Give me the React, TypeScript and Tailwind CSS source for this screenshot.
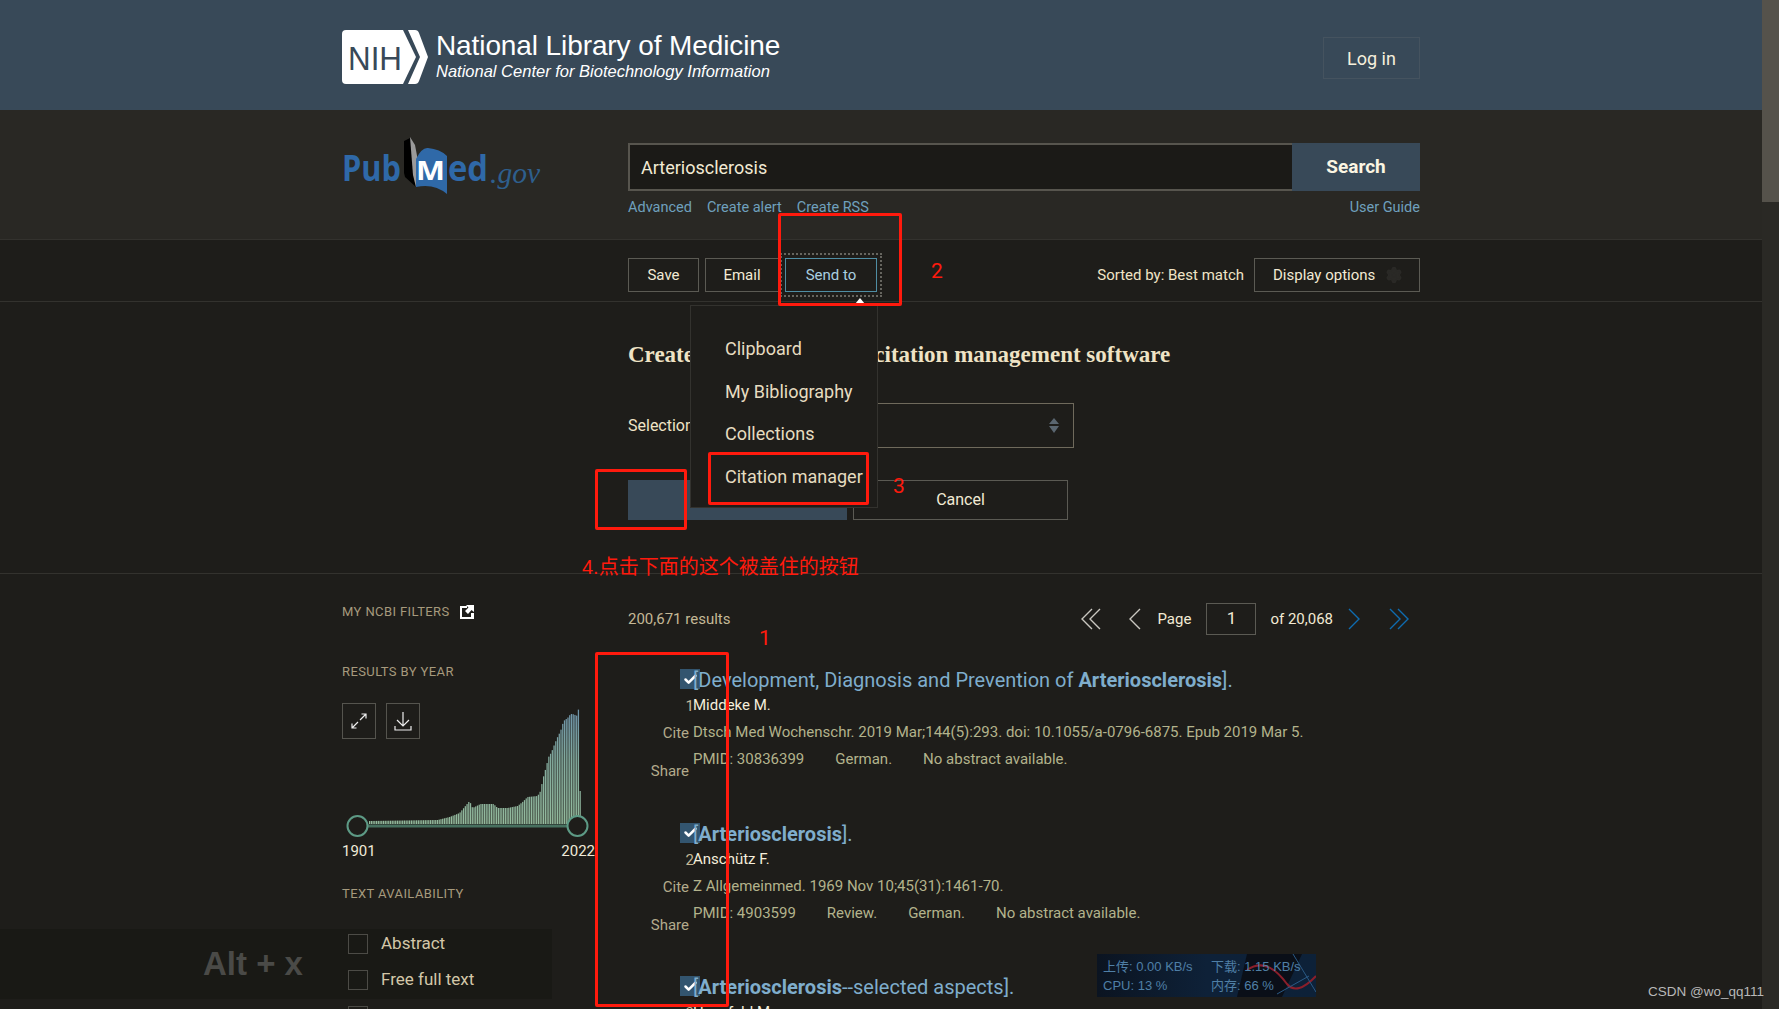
import React from 'react';
import { Check, Settings } from 'lucide-react';

const yearKeys: [number, number][] = [
  [0, 3], [68, 4], [80, 7], [90, 11], [100, 23], [103, 16], [111, 20], [124, 20], [128, 16], [138, 16],
  [148, 18], [153, 22], [158, 27], [168, 28], [171, 33], [173, 44], [176, 55], [179, 67], [182, 72],
  [185, 80], [188, 87], [191, 93], [194, 103], [198, 106], [201, 110], [203, 110], [208, 108], [209, 116], [211, 107],
];

function barHeight(x: number) {
  for (let i = 1; i < yearKeys.length; i++) {
    const [x0, h0] = yearKeys[i - 1];
    const [x1, h1] = yearKeys[i];
    if (x <= x1) return h0 + ((h1 - h0) * (x - x0)) / (x1 - x0);
  }
  return 33;
}

const bars = Array.from({ length: 122 }, (_, i) => {
  const x = i * 1.74;
  return { x: 27 + x, h: i === 121 ? 33 : barHeight(x) };
});

const results = [
  {
    n: 1,
    title: (
      <>
        [Development, Diagnosis and Prevention of <b className="font-bold">Arteriosclerosis</b>].
      </>
    ),
    author: 'Middeke M.',
    citation: 'Dtsch Med Wochenschr. 2019 Mar;144(5):293. doi: 10.1055/a-0796-6875. Epub 2019 Mar 5.',
    tags: ['PMID: 30836399', 'German.', 'No abstract available.'],
  },
  {
    n: 2,
    title: (
      <>
        [<b className="font-bold">Arteriosclerosis</b>].
      </>
    ),
    author: 'Anschütz F.',
    citation: 'Z Allgemeinmed. 1969 Nov 10;45(31):1461-70.',
    tags: ['PMID: 4903599', 'Review.', 'German.', 'No abstract available.'],
  },
  {
    n: 3,
    title: (
      <>
        [<b className="font-bold">Arteriosclerosis</b>--selected aspects].
      </>
    ),
    author: 'Hanefeld M.',
    citation: '',
    tags: [],
  },
];

function NihLogo() {
  return (
    <svg width="86" height="54" viewBox="0 0 86 54" className="shrink-0">
      <path d="M4 0H61L74 27L61 54H4Q0 54 0 50V4Q0 0 4 0Z" fill="#fff" />
      <path d="M66 0H73Q76 0 77 3L86 27L77 51Q76 54 73 54H66L78 27Z" fill="#fff" />
      <text x="6" y="40" fontFamily="'Liberation Sans', sans-serif" fontSize="34" fill="#384958" textLength="54" lengthAdjust="spacingAndGlyphs">
        NIH
      </text>
    </svg>
  );
}

function PubMedLogo() {
  return (
    <svg width="200" height="60" viewBox="0 0 200 60" className="shrink-0">
      <text x="0" y="44" fontFamily="'Open Sans', sans-serif" fontWeight="700" fontSize="36" fill="#2f69a8" textLength="59" lengthAdjust="spacingAndGlyphs">
        Pub
      </text>
      <path d="M62 36L62 4L68 1L71 10L72 42L74 50L63 40Z" fill="#000" />
      <path d="M68 0L73 8L76 24L74 50L71 38Z" fill="#9a9a9a" />
      <path d="M74 22Q80 10 86 11Q98 12 105 19L105 57Q92 46 74 50Z" fill="#2f69a8" />
      <text x="74" y="43" fontFamily="'Open Sans', sans-serif" fontWeight="700" fontSize="27" fill="#fff" textLength="29" lengthAdjust="spacingAndGlyphs">
        M
      </text>
      <text x="106" y="44" fontFamily="'Open Sans', sans-serif" fontWeight="700" fontSize="36" fill="#2f69a8" textLength="40" lengthAdjust="spacingAndGlyphs">
        ed
      </text>
      <text x="148" y="46" fontFamily="'Liberation Serif', serif" fontStyle="italic" fontSize="29" fill="#2e5f8d" textLength="50" lengthAdjust="spacingAndGlyphs">
        .gov
      </text>
    </svg>
  );
}

function Chevrons({ dir, double, color }: { dir: 'left' | 'right'; double?: boolean; color: string }) {
  const left = dir === 'left';
  return (
    <svg width={double ? 20 : 12} height="22" viewBox={double ? '0 0 20 22' : '0 0 12 22'} fill="none" stroke={color} strokeWidth="1.4">
      {left ? (
        <>
          <path d="M11 1L1 11L11 21" />
          {double && <path d="M19 1L9 11L19 21" />}
        </>
      ) : (
        <>
          <path d="M1 1L11 11L1 21" />
          {double && <path d="M9 1L19 11L9 21" />}
        </>
      )}
    </svg>
  );
}

function YearChart() {
  return (
    <svg width="248" height="140" viewBox="0 0 248 140" className="block">
      <defs>
        <linearGradient id="bar" gradientUnits="userSpaceOnUse" x1="0" y1="8" x2="0" y2="124">
          <stop offset="0" stopColor="#6d93ab" />
          <stop offset="0.45" stopColor="#83ab9e" />
          <stop offset="1" stopColor="#94bb9d" />
        </linearGradient>
      </defs>
      {bars.map((b) => (
        <rect key={b.x} x={b.x} y={124 - b.h} width="1.25" height={b.h} fill="url(#bar)" />
      ))}
      <rect x="25" y="124.5" width="200" height="3" fill="#47705f" />
      <circle cx="15.5" cy="126" r="10" fill="#1e1d1a" stroke="#5d9a85" strokeWidth="2" />
      <circle cx="235.5" cy="126" r="10" fill="#1e1d1a" stroke="#5d9a85" strokeWidth="2" />
    </svg>
  );
}

function SideTitle({ children, className }: { children: React.ReactNode; className?: string }) {
  return <div className={`h-5 text-[13px] leading-5 tracking-[0.4px] text-[#a69a7d] ${className ?? ''}`}>{children}</div>;
}

function FilterRow({ label }: { label: string }) {
  return (
    <div className="flex h-9 items-center">
      <span className="ml-[6px] h-5 w-5 shrink-0 border border-[#4c4b46]" />
      <span className="ml-[13px] text-[17px] text-[#d3c7a8]">{label}</span>
    </div>
  );
}

function ToolButton({ children, className }: { children: React.ReactNode; className?: string }) {
  return (
    <div className={`flex h-[34px] items-center justify-center border border-[#5b5a53] text-[15px] text-[#f2ead4] ${className ?? ''}`}>
      {children}
    </div>
  );
}

function ResultItem({ item }: { item: (typeof results)[number] }) {
  return (
    <article className="flex h-[153.5px]">
      <div className="flex w-[65px] shrink-0 flex-col items-end text-[15px] text-[#c4b896]">
        <span className="mr-[-7px] flex h-5 w-5 items-center justify-center bg-[#33556f]">
          <Check size={15} strokeWidth={4} color="#fff" />
        </span>
        <span className="mt-[7px] mr-[-1px] h-5 leading-5">{item.n}</span>
        <span className="mt-[7px] mr-[4px] h-5 leading-5 text-[#b3ab8c]">Cite</span>
        <span className="mt-[18px] mr-[4px] h-5 leading-5 text-[#b3ab8c]">Share</span>
      </div>
      <div className="min-w-0 flex-1">
        <div className="-mt-[1px] h-6 text-[20px] leading-6 whitespace-nowrap text-[#7fadcc]">{item.title}</div>
        <div className="mt-[3px] h-5 text-[15px] leading-5 text-[#f5eedb]">{item.author}</div>
        <div className="mt-[7px] h-5 text-[15px] leading-5 whitespace-nowrap text-[#b3b38c]">{item.citation}</div>
        <div className="mt-[7px] flex h-5 gap-[31px] text-[15px] leading-5 whitespace-nowrap text-[#b3b38c]">
          {item.tags.map((t) => (
            <span key={t}>{t}</span>
          ))}
        </div>
      </div>
    </article>
  );
}

function NetWidget() {
  return (
    <div className="absolute top-[954px] left-[1097px] z-20 h-[43px] w-[219px] overflow-hidden bg-gradient-to-r from-[#0b1421] via-[#0e2138] to-[#0d2138]">
      <svg width="219" height="43" viewBox="0 0 219 43" className="absolute inset-0" fill="none">
        <path d="M150 0L140 43H185L205 0Z" fill="#0a0f18" />
        <path d="M150 16Q170 2 190 30Q200 42 219 22" stroke="#8a1f2b" strokeWidth="2" />
        <path d="M180 40L212 22M196 0L219 38" stroke="#2a5a85" strokeWidth="1" />
      </svg>
      <div className="relative grid grid-cols-[108px_1fr] pt-[3px] pl-[6px] font-['Liberation_Sans','Noto_Sans_CJK_SC',sans-serif] text-[13px] leading-[19px] text-[#4f7fa6]">
        <span>上传: 0.00 KB/s</span>
        <span>下载: 1.15 KB/s</span>
        <span>CPU: 13 %</span>
        <span>内存: 66 %</span>
      </div>
    </div>
  );
}

export default function App() {
  return (
    <div className="relative flex h-screen overflow-hidden bg-[#1e1d1a] font-['Roboto',sans-serif] text-[#f2ead4]">
      <div className="min-w-0 flex-1">
        <header className="h-[110px] bg-[#384958]">
          <div className="mx-auto flex h-full w-[1078px] items-start justify-between pt-[30px]">
            <div className="flex">
              <NihLogo />
              <div className="ml-[8px] pt-[1px] font-['Liberation_Sans',sans-serif] text-white">
                <div className="text-[28px] leading-[30px] tracking-[-0.1px]">National Library of Medicine</div>
                <div className="text-[16.5px] leading-[21px] italic">National Center for Biotechnology Information</div>
              </div>
            </div>
            <div className="mt-[7px] flex h-[42px] w-[97px] items-center justify-center border border-[#45535f] text-[18px] text-[#f5efdc]">
              Log in
            </div>
          </div>
        </header>

        <section className="h-[130px] border-b border-[#33322e] bg-[#292824]">
          <div className="mx-auto flex w-[1078px] pt-[27px]">
            <PubMedLogo />
            <div className="ml-[86px] flex-1 pt-[6px]">
              <div className="flex h-12">
                <div className="flex flex-1 items-center border-y-2 border-l-2 border-[#57554e] bg-[#1b1a17] pl-[11px] text-[18px] text-[#f2ead4]">
                  Arteriosclerosis
                </div>
                <div className="flex w-[128px] items-center justify-center bg-[#384958] text-[19px] font-bold text-[#fbf5e2]">Search</div>
              </div>
              <div className="mt-[8px] flex h-[18px] items-center gap-[15px] text-[14.5px] text-[#6fa0bd]">
                <span>Advanced</span>
                <span>Create alert</span>
                <span>Create RSS</span>
                <span className="ml-auto">User Guide</span>
              </div>
            </div>
          </div>
        </section>

        <section className="h-[62px] border-b border-[#33322e]">
          <div className="mx-auto flex w-[1078px] items-center pt-[13px] pl-[286px]">
            <ToolButton className="w-[71px]">Save</ToolButton>
            <ToolButton className="ml-[6px] w-[74px]">Email</ToolButton>
            <div className="ml-[1px] border-2 border-dotted border-[#66655f] p-[3px]">
              <ToolButton className="w-[92px] !border-[#4f8da3] !text-[#a9cfe0]">Send to</ToolButton>
            </div>
            <span className="ml-auto text-[15px] text-[#f0e4c6]">Sorted by: Best match</span>
            <ToolButton className="ml-[10px] w-[166px] !justify-start gap-[10px] pl-[18px]">
              Display options
              <Settings size={18} color="#2a2926" fill="#2a2926" />
            </ToolButton>
          </div>
        </section>

        <section className="h-[272px] border-b border-[#33322e]">
          <div className="mx-auto w-[1078px] pl-[286px]">
            <h2 className="pt-[39px] font-['Liberation_Serif',serif] text-[23px] leading-[28px] font-bold text-[#efe3c5]">
              Create a file for external citation management software
            </h2>
            <div className="mt-[34px] flex h-[45px] items-center">
              <span className="text-[16px] text-[#f0e4c6]">Selection:</span>
              <div className="ml-[20px] flex h-[45px] w-[356px] items-center justify-end border border-[#6f6a5c] pr-[14px]">
                <svg width="10" height="15" viewBox="0 0 10 15" fill="#5a6670">
                  <path d="M5 0L10 6H0ZM0 8H10L5 15Z" />
                </svg>
              </div>
            </div>
            <div className="mt-[32px] flex h-10 gap-[6px]">
              <div className="flex w-[219px] items-center justify-center bg-[#384958] text-[16px]">Create file</div>
              <div className="flex w-[215px] items-center justify-center border border-[#5b5a53] text-[16px] text-[#f2ead4]">Cancel</div>
            </div>
          </div>
        </section>

        <div className="mx-auto flex w-[1078px]">
          <aside className="relative z-10 w-[286px] shrink-0 pt-[28px]">
            <SideTitle className="flex items-center gap-[10px]">
              MY NCBI FILTERS
              <svg width="14" height="14" viewBox="0 0 14 14">
                <path d="M0 1H7V3H2V12H11V8H14V14H0Z" fill="#fff" />
                <path d="M6 0H14V7L11.5 5L8 9L5 6L8.5 2.5Z" fill="#fff" />
              </svg>
            </SideTitle>
            <SideTitle className="mt-[40px]">RESULTS BY YEAR</SideTitle>
            <div className="relative mt-[18px]">
              <YearChart />
              <div className="absolute top-[3px] left-0 flex gap-[10px]">
                <div className="flex h-9 w-[34px] items-center justify-center border border-[#55544e]">
                  <svg width="16" height="16" viewBox="0 0 16 16" fill="none" stroke="#eee" strokeWidth="1.2">
                    <path d="M9 7L15 1M10.5 1H15V5.5M7 9L1 15M1 10.5V15H5.5" />
                  </svg>
                </div>
                <div className="flex h-9 w-[34px] items-center justify-center border border-[#55544e]">
                  <svg width="18" height="20" viewBox="0 0 18 20" fill="none" stroke="#eee" strokeWidth="1.2">
                    <path d="M9 1V15M3 9L9 15L15 9M1 15V19H17V15" />
                  </svg>
                </div>
              </div>
            </div>
            <div className="mt-[1px] flex h-5 w-[253px] justify-between text-[15px] leading-5 text-[#f0ead8]">
              <span>1901</span>
              <span>2022</span>
            </div>
            <SideTitle className="mt-[23px]">TEXT AVAILABILITY</SideTitle>
            <div className="mt-[22px]">
              <FilterRow label="Abstract" />
              <FilterRow label="Free full text" />
              <FilterRow label="Full text" />
            </div>
          </aside>

          <main className="min-w-0 flex-1 pt-[29px]">
            <div className="flex h-8 items-center text-[15px]">
              <span className="text-[#c4b896]">200,671 results</span>
              <div className="ml-auto flex items-center pr-[11px] text-[#f2ead4]">
                <Chevrons dir="left" double color="#c9c7c0" />
                <span className="ml-[28px]">
                  <Chevrons dir="left" color="#c9c7c0" />
                </span>
                <span className="ml-[16px]">Page</span>
                <span className="ml-[15px] flex h-8 w-[50px] items-center justify-center border border-[#5b5a53] text-[17px]">1</span>
                <span className="ml-[14px]">of 20,068</span>
                <span className="ml-[15px]">
                  <Chevrons dir="right" color="#0f6cb0" />
                </span>
                <span className="ml-[29px]">
                  <Chevrons dir="right" double color="#0f6cb0" />
                </span>
              </div>
            </div>
            <div className="mt-[34px]">
              {results.map((r) => (
                <ResultItem key={r.n} item={r} />
              ))}
            </div>
          </main>
        </div>
      </div>

      {/* scrollbar */}
      <div className="relative z-30 w-[17px] shrink-0 bg-[#2a2925]">
        <div className="h-[202px] bg-[#55524b]" />
      </div>

      {/* Send to menu */}
      <div className="absolute top-[298px] left-[855px] z-20 h-0 w-0 border-x-[5px] border-b-[6px] border-x-transparent border-b-white" />
      <nav className="absolute top-[305px] left-[690px] z-20 flex h-[203px] w-[188px] flex-col border border-[#33322e] bg-[#1e1d1a] pt-[22px] pl-[34px] text-[18px] text-[#e6dcc0]">
        <a className="h-[42.5px] leading-[42px]">Clipboard</a>
        <a className="h-[42.5px] leading-[42px]">My Bibliography</a>
        <a className="h-[42.5px] leading-[42px]">Collections</a>
        <a className="h-[42.5px] leading-[42px] whitespace-nowrap">Citation manager</a>
      </nav>

      {/* screen capture hint */}
      <div className="absolute top-[929px] left-0 z-0 flex h-[70px] w-[552px] items-center bg-[#191915] pl-[203px] font-['Liberation_Sans',sans-serif] text-[33px] font-bold text-[#4a4a47]">
        Alt + x
      </div>

      <NetWidget />
      <div className="absolute top-[982px] left-[1648px] z-40 font-['Liberation_Sans',sans-serif] text-[13.5px] text-[#b8b8b8]">CSDN @wo_qq111</div>

      {/* red annotations */}
      <div className="absolute top-[213px] left-[778px] z-30 h-[93px] w-[124px] rounded-[2px] border-[3px] border-[#ff1a0d]" />
      <div className="absolute top-[452px] left-[708px] z-30 h-[53px] w-[161px] rounded-[2px] border-[3px] border-[#ff1a0d]" />
      <div className="absolute top-[469px] left-[595px] z-30 h-[61px] w-[92px] rounded-[2px] border-[3px] border-[#ff1a0d]" />
      <div className="absolute top-[652px] left-[595px] z-30 h-[355px] w-[134px] rounded-[2px] border-[3px] border-[#ff1a0d]" />
      <span className="absolute top-[258px] left-[931px] z-30 text-[21px] leading-[26px] text-[#ff1a0d]">2</span>
      <span className="absolute top-[473px] left-[893px] z-30 text-[21px] leading-[26px] text-[#ff1a0d]">3</span>
      <span className="absolute top-[625px] left-[759px] z-30 text-[21px] leading-[26px] text-[#ff1a0d]">1</span>
      <span className="absolute top-[553px] left-[582px] z-30 font-['Liberation_Sans','Noto_Sans_CJK_SC',sans-serif] text-[20px] leading-[28px] whitespace-nowrap text-[#ff1a0d]">
        4.点击下面的这个被盖住的按钮
      </span>
    </div>
  );
}
